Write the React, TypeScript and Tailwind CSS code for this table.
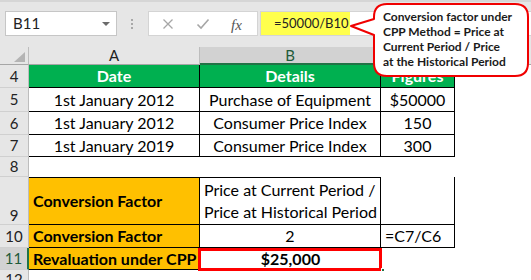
import React from "react";

function RowHead({ n, h, bottom, sel }: { n: string; h: string; bottom?: boolean; sel?: boolean }) {
  return (
    <div
      className={`w-[29px] shrink-0 ${h} flex justify-center ${bottom ? "items-end pb-[1px]" : "items-center"} border-b border-[#d0d0d0] ${
        sel ? "bg-[#d2d2d2] border-r-2 border-r-[#217346] text-[#1e5a3a]" : "bg-[#e6e6e6] border-r border-r-[#bdbdbd] text-[#222]"
      } text-[15px] leading-none`}
    >
      {n}
    </div>
  );
}

export default function App() {
  return (
    <div className="relative w-[531px] h-[280px] overflow-hidden bg-[#e6e6e6] font-[Lato,sans-serif] text-black">
      {/* Top formula bar */}
      <div className="h-[2px] bg-[#d6d6d6]" />
      <div className="h-[45px] flex items-start pt-[9px]">
        <div className="ml-[5px] w-[112px] h-[25px] bg-white border border-[#c6c6c6] flex items-center pl-[7px] text-[15px] text-[#222] relative">
          B11
          <div className="absolute right-[6px] top-[10px] w-0 h-0 border-l-[4px] border-r-[4px] border-t-[4px] border-l-transparent border-r-transparent border-t-[#6b6b6b]" />
        </div>
        <div className="ml-[14px] w-[3px] h-[25px] flex flex-col justify-center gap-[2px]">
          <div className="w-[2px] h-[2px] bg-[#a8a8a8]" />
          <div className="w-[2px] h-[2px] bg-[#a8a8a8]" />
          <div className="w-[2px] h-[2px] bg-[#a8a8a8]" />
        </div>
        <div className="ml-[14px] w-[110px] h-[25px] bg-white border border-[#d4d4d4] relative">
          <svg className="absolute left-[13px] top-[6px]" width="12" height="12" viewBox="0 0 12 12">
            <path d="M1.5 1.5 L10.5 10.5 M10.5 1.5 L1.5 10.5" stroke="#a6a6a6" strokeWidth="1.3" fill="none" />
          </svg>
          <svg className="absolute left-[47px] top-[6px]" width="14" height="12" viewBox="0 0 14 12">
            <path d="M1.5 6.5 L5 10 L12.5 1.5" stroke="#a6a6a6" strokeWidth="1.6" fill="none" />
          </svg>
          <span className="absolute left-[82px] top-[2px] text-[15px] italic text-[#555] font-['Liberation_Serif',serif]">
            fx
          </span>
        </div>
        <div className="ml-[2px] flex-1 h-[25px] bg-white border border-[#d4d4d4] border-r-0 flex">
          <div className="w-[89px] h-full bg-[#ffff4d] flex items-center pl-[13px] text-[13px] text-[#222]">
            =50000/B10
          </div>
        </div>
      </div>

      {/* Column headers */}
      <div className="flex h-[18px] text-[15px] leading-none">
        <div className="w-[29px] shrink-0 h-full bg-[#e6e6e6] border-r border-[#bdbdbd] border-b border-b-[#a6a6a6] relative">
          <svg className="absolute left-[14px] top-[5px]" width="11" height="10" viewBox="0 0 11 10">
            <path d="M11 0 L11 10 L0 10 Z" fill="#b4b4b4" />
          </svg>
        </div>
        <div className="w-[171px] shrink-0 h-full bg-[#e6e6e6] border-r border-[#bdbdbd] border-b border-b-[#a6a6a6] flex items-center justify-center text-[#222]">
          A
        </div>
        <div className="w-[181px] shrink-0 h-full bg-[#d2d2d2] border-r border-[#bdbdbd] border-b-2 border-b-[#217346] flex items-center justify-center text-[#1e5a3a]">
          B
        </div>
        <div className="w-[74px] shrink-0 h-full bg-[#e6e6e6] border-r border-[#bdbdbd] border-b border-b-[#a6a6a6]" />
        <div className="flex-1 h-full bg-[#e6e6e6] border-b border-b-[#a6a6a6]" />
      </div>

      {/* Sheet */}
      <div className="bg-white text-[16px] leading-none">
        {/* Row 4 */}
        <div className="flex h-[23px]">
          <RowHead n="4" h="h-[23px]" />
          <div className="w-[171px] shrink-0 bg-[#00b050] border-r border-b border-black flex items-center justify-center font-bold text-white">
            Date
          </div>
          <div className="w-[181px] shrink-0 bg-[#00b050] border-r border-b border-black flex items-center justify-center font-bold text-white">
            Details
          </div>
          <div className="w-[74px] shrink-0 bg-[#00b050] border-r border-b border-black flex items-center justify-center font-bold text-white">
            Figures
          </div>
          <div className="flex-1" />
        </div>
        {/* Row 5 */}
        <div className="flex h-[24px]">
          <RowHead n="5" h="h-[24px]" />
          <div className="w-[171px] shrink-0 border-r border-b border-black flex items-center justify-center">1st January 2012</div>
          <div className="w-[181px] shrink-0 border-r border-b border-black flex items-center justify-center">Purchase of Equipment</div>
          <div className="w-[74px] shrink-0 border-r border-b border-black flex items-center justify-center">$50000</div>
          <div className="flex-1" />
        </div>
        {/* Row 6 */}
        <div className="flex h-[23px]">
          <RowHead n="6" h="h-[23px]" />
          <div className="w-[171px] shrink-0 border-r border-b border-black flex items-center justify-center">1st January 2012</div>
          <div className="w-[181px] shrink-0 border-r border-b border-black flex items-center justify-center">Consumer Price Index</div>
          <div className="w-[74px] shrink-0 border-r border-b border-black flex items-center justify-center">150</div>
          <div className="flex-1" />
        </div>
        {/* Row 7 */}
        <div className="flex h-[22px]">
          <RowHead n="7" h="h-[22px]" />
          <div className="w-[171px] shrink-0 border-r border-b border-black flex items-center justify-center">1st January 2019</div>
          <div className="w-[181px] shrink-0 border-r border-b border-black flex items-center justify-center">Consumer Price Index</div>
          <div className="w-[74px] shrink-0 border-r border-b border-black flex items-center justify-center">300</div>
          <div className="flex-1" />
        </div>
        {/* Row 8 */}
        <div className="flex h-[20px]">
          <RowHead n="8" h="h-[20px]" />
          <div className="flex-1" />
        </div>
        {/* Row 9 */}
        <div className="flex h-[48px]">
          <RowHead n="9" h="h-[48px]" bottom />
          <div className="w-[171px] shrink-0 bg-[#ffc000] border-t border-r border-b border-black flex items-center pl-[4px] font-bold">
            Conversion Factor
          </div>
          <div className="w-[181px] shrink-0 border-t border-r border-b border-black flex flex-col justify-center pl-[4px] leading-[22px]">
            <span>Price at Current Period /</span>
            <span>Price at Historical Period</span>
          </div>
          <div className="w-[74px] shrink-0 border-b border-r border-black" />
          <div className="flex-1" />
        </div>
        {/* Row 10 */}
        <div className="flex h-[23px]">
          <RowHead n="10" h="h-[23px]" />
          <div className="w-[171px] shrink-0 bg-[#ffc000] border-r border-b border-black flex items-center pl-[4px] font-bold">
            Conversion Factor
          </div>
          <div className="w-[181px] shrink-0 border-r border-b border-black flex items-center justify-center">2</div>
          <div className="w-[74px] shrink-0 border-r border-b border-black flex items-center pl-[4px]">=C7/C6</div>
          <div className="flex-1" />
        </div>
        {/* Row 11 */}
        <div className="flex h-[22px]">
          <RowHead n="11" h="h-[22px]" sel />
          <div className="w-[171px] shrink-0 bg-[#ffc000] border-r border-b border-black flex items-center pl-[4px] font-bold">
            Revaluation under CPP
          </div>
          <div className="w-[181px] shrink-0 border-b border-black flex items-center justify-center font-bold relative">
            $25,000
            <div className="absolute left-[-2px] top-0 w-[184px] h-[23px] border-[3px] border-[#ff0000]" />
            <div className="absolute left-[181px] top-[20px] w-[4px] h-[4px] bg-[#217346] border border-white" />
          </div>
          <div className="flex-1" />
        </div>
        {/* Row 12 */}
        <div className="flex h-[20px]">
          <RowHead n="12" h="h-[20px]" />
          <div className="flex-1" />
        </div>
      </div>

      {/* Callout */}
      <svg className="absolute left-[349px] top-[2px]" width="182" height="76" viewBox="0 0 182 76">
        <path
          d="M38 2 H166 Q179 2 179 15 V61 Q179 74 166 74 H38 Q25 74 25 61 V33 L2 24 L25 17 V15 Q25 2 38 2 Z"
          fill="white"
          stroke="#f00000"
          strokeWidth="2"
          strokeLinejoin="round"
        />
      </svg>
      <div className="absolute left-[383px] top-[9px] text-[12px] leading-[15px] font-bold text-[#1a1a1a]">
        <div>Conversion factor under</div>
        <div>CPP Method = Price at</div>
        <div>Current Period / Price</div>
        <div>at the Historical Period</div>
      </div>
    </div>
  );
}
